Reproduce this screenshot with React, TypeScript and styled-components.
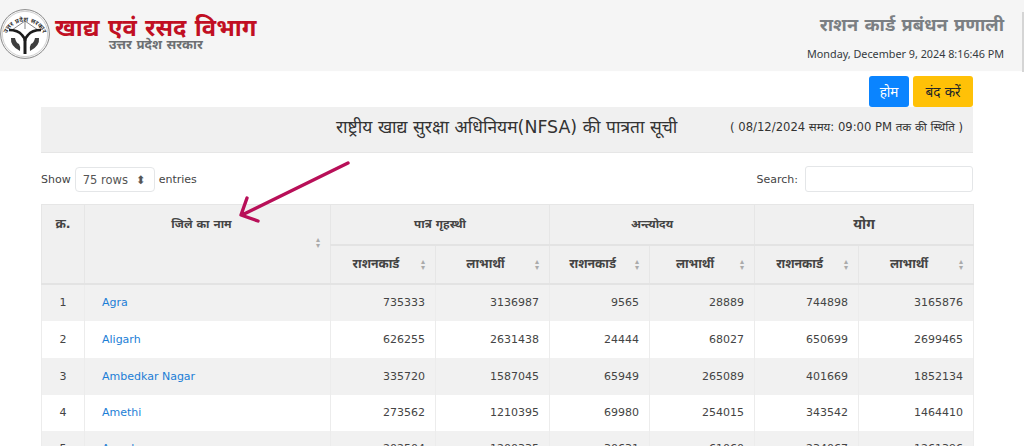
import React from 'react'
import styled, { createGlobalStyle } from 'styled-components'

const GlobalStyle = createGlobalStyle`
  html, body {
    margin: 0;
    padding: 0;
    height: 446px;
    overflow: hidden;
    background: #fff;
    font-family: "DejaVu Sans", "Noto Sans", sans-serif;
    color: #212529;
  }
`

const Page = styled.div`
  position: relative;
  width: 1024px;
  height: 446px;
  overflow: hidden;
`

const Header = styled.header`
  height: 70px;
  background: #f5f5f5;
  display: flex;
  justify-content: space-between;
  box-shadow: 0 1px 1px rgba(0, 0, 0, 0.04);
`

const Brand = styled.div`
  display: flex;
  align-items: flex-start;
  padding: 8px 0 0 0;
  gap: 5px;
`

const BrandText = styled.div`
  display: flex;
  flex-direction: column;
  align-items: center;
  margin-top: 3px;
`

const BrandTitle = styled.div`
  color: #c10f23;
  font-size: 23.8px;
  line-height: 34px;
  font-weight: 700;
  white-space: nowrap;
`

const BrandSub = styled.div`
  color: #6c6f72;
  font-size: 13.2px;
  line-height: 14px;
  font-weight: 700;
  margin-top: -7px;
`

const HeaderRight = styled.div`
  display: flex;
  flex-direction: column;
  align-items: flex-end;
  padding: 11px 20px 0 0;
`

const SystemName = styled.div`
  color: #7b7f83;
  font-size: 18.2px;
  line-height: 28px;
  font-weight: 700;
  white-space: nowrap;
`

const Clock = styled.div`
  margin-top: 8px;
  font-family: "Noto Sans", "Open Sans", sans-serif;
  font-size: 10.8px;
  line-height: 14px;
  color: #343a40;
  white-space: nowrap;
`

const Content = styled.main`
  padding: 6px 51px 0 41px;
`

const Actions = styled.div`
  display: flex;
  justify-content: flex-end;
  gap: 4px;
  height: 31px;
`

const ActionButton = styled.button<{ $tone: 'blue' | 'yellow' }>`
  border: 0;
  border-radius: 3px;
  padding: 0;
  width: ${({ $tone }) => ($tone === 'blue' ? '40px' : '60px')};
  font-family: inherit;
  font-size: 13.5px;
  background: ${({ $tone }) => ($tone === 'blue' ? '#0a84ff' : '#ffc107')};
  color: ${({ $tone }) => ($tone === 'blue' ? '#fff' : '#212529')};
`

const TitlePanel = styled.section`
  height: 46px;
  background: #f0f0f0;
  border-bottom: 1px solid #e6e6e6;
  box-sizing: border-box;
  display: flex;
  align-items: flex-start;
  padding-top: 6px;
`

const PanelTitle = styled.h2`
  margin: 0 0 0 295px;
  font-size: 17.4px;
  line-height: 28px;
  font-weight: 400;
  color: #333;
  white-space: nowrap;
`

const PanelNote = styled.span`
  margin-left: auto;
  margin-right: 10px;
  padding-top: 4px;
  font-size: 11.6px;
  line-height: 20px;
  color: #333;
  white-space: nowrap;
`

const Controls = styled.div`
  height: 51px;
  display: flex;
  justify-content: space-between;
  align-items: center;
  padding-top: 1px;
  box-sizing: border-box;
  font-size: 11px;
  color: #444;
`

const Group = styled.div`
  display: flex;
  align-items: center;
  gap: 4px;
`

const RowSelect = styled.div`
  width: 80px;
  height: 25px;
  box-sizing: border-box;
  border: 1px solid #e4e6e8;
  border-radius: 4px;
  display: flex;
  align-items: center;
  justify-content: space-between;
  padding: 2px 8px 0 7px;
  font-size: 11.5px;
  color: #555;
`

const SearchBox = styled.input`
  width: 168px;
  height: 26px;
  box-sizing: border-box;
  border: 1px solid #e4e6e8;
  border-radius: 3px;
  margin-left: 3px;
`

const Table = styled.table`
  width: 932px;
  table-layout: fixed;
  border-collapse: collapse;
  font-size: 11px;
  color: #444;
`

const HeadCell = styled.th<{ $size?: number }>`
  background: #f0f0f0;
  border: 1px solid #e6e6e6;
  border-bottom: 2px solid #e3e3e3;
  font-weight: 700;
  font-size: ${({ $size }) => $size ?? 11.7}px;
  color: #444;
  vertical-align: top;
  padding: 10px 4px 0;
  line-height: 18px;
  position: relative;
`

const DistrictHead = styled(HeadCell)`
  padding: 10px 16px 0 4px;
`

const SubHeadCell = styled(HeadCell)`
  padding: 9px 18px 0 4px;
`

const SortMark = styled.span<{ $low?: boolean }>`
  position: absolute;
  right: 10px;
  top: ${({ $low }) => ($low ? '32px' : '13px')};
  color: #aaa;
  font-size: 8px;
  line-height: 6px;
  font-weight: 400;
  display: flex;
  flex-direction: column;
  align-items: center;
`

const Row = styled.tr<{ $h: number; $odd: boolean }>`
  height: ${({ $h }) => $h}px;
  background: ${({ $odd }) => ($odd ? '#f1f1f1' : '#fff')};
`

const Cell = styled.td<{ $align: 'left' | 'center' | 'right' }>`
  border: 1px solid #ececec;
  border-top: 0;
  border-bottom: 0;
  text-align: ${({ $align }) => $align};
  padding: 0 ${({ $align }) => ($align === 'right' ? '10px' : '4px')} 0
    ${({ $align }) => ($align === 'left' ? '17px' : '4px')};
  font-size: 11px;
`

const DistrictLink = styled.a`
  color: #1c7ed6;
  text-decoration: none;
`

const ArrowOverlay = styled.svg`
  position: absolute;
  left: 232px;
  top: 155px;
`

const ScrollEdge = styled.div`
  position: absolute;
  right: 0;
  top: 12px;
  width: 2px;
  height: 60px;
  background: #d5d5d5;
`

const Sort = ({ low }: { low?: boolean }) => (
  <SortMark $low={low}>
    <span>▴</span>
    <span>▾</span>
  </SortMark>
)

// UP government seal: ring with lettering, bow and fish around the Y mark
const Seal = () => (
  <svg width="50" height="52" viewBox="0 0 50 52">
    <circle cx="25" cy="26" r="24.4" fill="#f4f4f4" stroke="#8a8a8a" strokeWidth="1" />
    <circle cx="25" cy="26" r="22.6" fill="#fff" stroke="#aaa" strokeWidth="0.5" />
    <path id="sealRing" d="M5.5 30a19.8 19.8 0 0 1 39 0" fill="none" />
    <text fontSize="6.2" fontWeight="700" fill="#333" letterSpacing="0.1">
      <textPath href="#sealRing" startOffset="50%" textAnchor="middle">
        उत्तर प्रदेश सरकार
      </textPath>
    </text>
    <path d="M25 13L12 22M25 13L38 22M25 13v8" fill="none" stroke="#555" strokeWidth="0.7" />
    <path d="M9 22q9 0 13 5q3 3 3 6q0-3 3-6q4-5 13-5" fill="none" stroke="#1c1c1c" strokeWidth="2.6" />
    <path d="M25 29v17" stroke="#1c1c1c" strokeWidth="3" />
    <path d="M11 30q-1 8 9 13q1-4-1-7q-3-1-4-6zM39 30q1 8-9 13q-1-4 1-7q3-1 4-6z" fill="#3d3d3d" />
  </svg>
)

const rows = [
  { n: 1, name: 'Agra', h: 37, v: [735333, 3136987, 9565, 28889, 744898, 3165876] },
  { n: 2, name: 'Aligarh', h: 37, v: [626255, 2631438, 24444, 68027, 650699, 2699465] },
  { n: 3, name: 'Ambedkar Nagar', h: 37, v: [335720, 1587045, 65949, 265089, 401669, 1852134] },
  { n: 4, name: 'Amethi', h: 36, v: [273562, 1210395, 69980, 254015, 343542, 1464410] },
  { n: 5, name: 'Amroha', h: 36, v: [202504, 1200335, 30631, 61060, 234067, 1261396] },
]

export default function App() {
  return (
    <Page>
      <GlobalStyle />
      <Header>
        <Brand>
          <Seal />
          <BrandText>
            <BrandTitle>खाद्य एवं रसद विभाग</BrandTitle>
            <BrandSub>उत्तर प्रदेश सरकार</BrandSub>
          </BrandText>
        </Brand>
        <HeaderRight>
          <SystemName>राशन कार्ड प्रबंधन प्रणाली</SystemName>
          <Clock>Monday, December 9, 2024 8:16:46 PM</Clock>
        </HeaderRight>
      </Header>
      <Content>
        <Actions>
          <ActionButton $tone="blue">होम</ActionButton>
          <ActionButton $tone="yellow">बंद करें</ActionButton>
        </Actions>
        <TitlePanel>
          <PanelTitle>राष्ट्रीय खाद्य सुरक्षा अधिनियम(NFSA) की पात्रता सूची</PanelTitle>
          <PanelNote>( 08/12/2024 समय: 09:00 PM तक की स्थिति )</PanelNote>
        </TitlePanel>
        <Controls>
          <Group>
            Show
            <RowSelect>
              75 rows <span>⬍</span>
            </RowSelect>
            entries
          </Group>
          <Group>
            Search:
            <SearchBox aria-label="Search" />
          </Group>
        </Controls>
        <Table>
          <colgroup>
            {[43, 246, 105, 114, 100, 105, 104, 115].map((w, i) => (
              <col key={i} style={{ width: w }} />
            ))}
          </colgroup>
          <thead>
            <tr style={{ height: 40 }}>
              <HeadCell rowSpan={2} $size={12.5}>क्र.</HeadCell>
              <DistrictHead rowSpan={2} $size={11.6}>
                जिले का नाम
                <Sort low />
              </DistrictHead>
              <HeadCell colSpan={2}>पात्र गृहस्थी</HeadCell>
              <HeadCell colSpan={2}>अन्त्योदय</HeadCell>
              <HeadCell colSpan={2} $size={14}>योग</HeadCell>
            </tr>
            <tr style={{ height: 39 }}>
              {['राशनकार्ड', 'लाभार्थी', 'राशनकार्ड', 'लाभार्थी', 'राशनकार्ड', 'लाभार्थी'].map((t, i) => (
                <SubHeadCell key={i} $size={12.3}>
                  {t}
                  <Sort />
                </SubHeadCell>
              ))}
            </tr>
          </thead>
          <tbody>
            {rows.map((r) => (
              <Row key={r.n} $h={r.h} $odd={r.n % 2 === 1}>
                <Cell $align="center">{r.n}</Cell>
                <Cell $align="left">
                  <DistrictLink href="#">{r.name}</DistrictLink>
                </Cell>
                {r.v.map((x, i) => (
                  <Cell key={i} $align="right">{x}</Cell>
                ))}
              </Row>
            ))}
          </tbody>
        </Table>
      </Content>
      <ArrowOverlay width="125" height="75" viewBox="0 0 125 75">
        <path
          d="M116 8 L10 60 M15 43 L9 60 L26 66"
          fill="none"
          stroke="#b80f58"
          strokeWidth="3.4"
          strokeLinecap="round"
          strokeLinejoin="round"
        />
      </ArrowOverlay>
      <ScrollEdge />
    </Page>
  )
}
